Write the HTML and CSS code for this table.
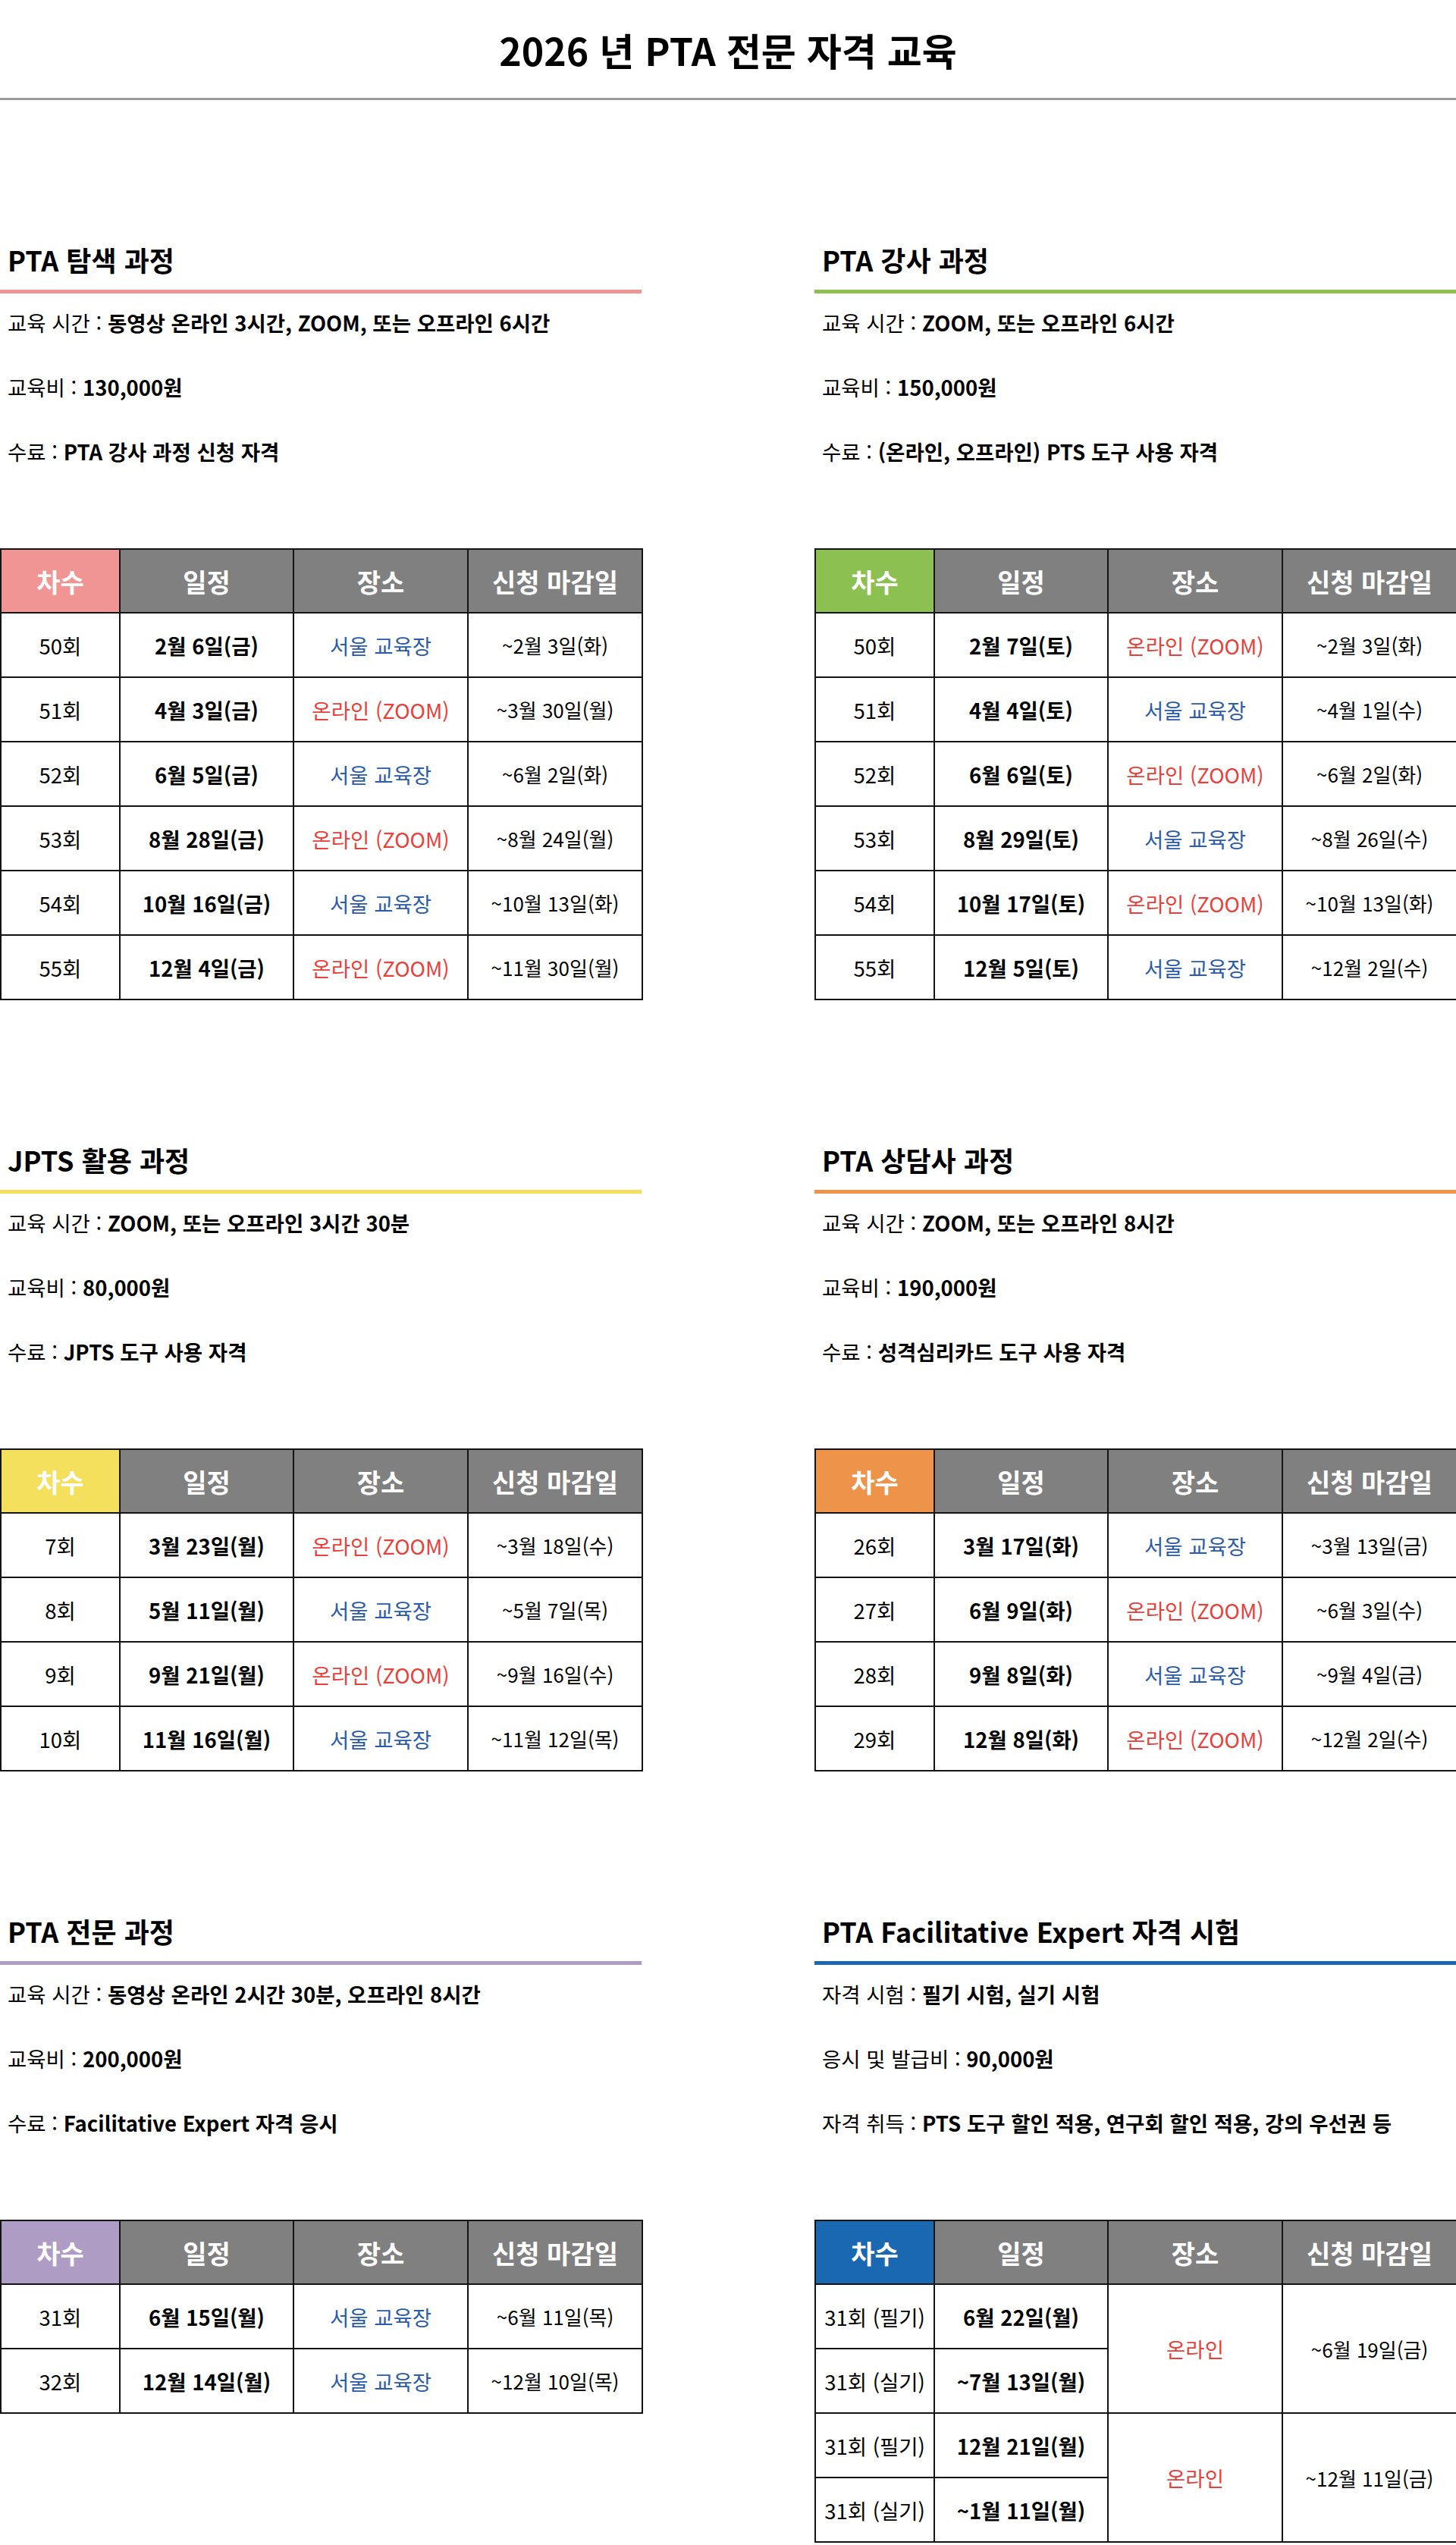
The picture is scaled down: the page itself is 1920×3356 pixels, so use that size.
FILE: index.html
```html
<!DOCTYPE html>
<html lang="ko">
<head>
<meta charset="utf-8">
<title>2026 년 PTA 전문 자격 교육</title>
<link rel="stylesheet" href="styles.css">
</head>
<body>
<header class="page-header">
  <h1 class="page-title">2026 년 PTA 전문 자격 교육</h1>
</header>
<main class="courses">

  <section class="course pink">
    <h2 class="course-title">PTA 탐색 과정</h2>
    <ul class="course-info">
      <li>교육 시간 : <b>동영상 온라인 3시간, ZOOM, 또는 오프라인 6시간</b></li>
      <li>교육비 : <b>130,000원</b></li>
      <li>수료 : <b>PTA 강사 과정 신청 자격</b></li>
    </ul>
    <table class="schedule">
      <colgroup><col class="c1"><col class="c2"><col class="c3"><col class="c4"></colgroup>
      <thead><tr><th class="round">차수</th><th>일정</th><th>장소</th><th>신청 마감일</th></tr></thead>
      <tbody>
        <tr><td>50회</td><td class="date">2월 6일(금)</td><td class="seoul">서울 교육장</td><td class="due">~2월 3일(화)</td></tr>
        <tr><td>51회</td><td class="date">4월 3일(금)</td><td class="online">온라인 (ZOOM)</td><td class="due">~3월 30일(월)</td></tr>
        <tr><td>52회</td><td class="date">6월 5일(금)</td><td class="seoul">서울 교육장</td><td class="due">~6월 2일(화)</td></tr>
        <tr><td>53회</td><td class="date">8월 28일(금)</td><td class="online">온라인 (ZOOM)</td><td class="due">~8월 24일(월)</td></tr>
        <tr><td>54회</td><td class="date">10월 16일(금)</td><td class="seoul">서울 교육장</td><td class="due">~10월 13일(화)</td></tr>
        <tr><td>55회</td><td class="date">12월 4일(금)</td><td class="online">온라인 (ZOOM)</td><td class="due">~11월 30일(월)</td></tr>
      </tbody>
    </table>
  </section>

  <section class="course green">
    <h2 class="course-title">PTA 강사 과정</h2>
    <ul class="course-info">
      <li>교육 시간 : <b>ZOOM, 또는 오프라인 6시간</b></li>
      <li>교육비 : <b>150,000원</b></li>
      <li>수료 : <b>(온라인, 오프라인) PTS 도구 사용 자격</b></li>
    </ul>
    <table class="schedule">
      <colgroup><col class="c1"><col class="c2"><col class="c3"><col class="c4"></colgroup>
      <thead><tr><th class="round">차수</th><th>일정</th><th>장소</th><th>신청 마감일</th></tr></thead>
      <tbody>
        <tr><td>50회</td><td class="date">2월 7일(토)</td><td class="online">온라인 (ZOOM)</td><td class="due">~2월 3일(화)</td></tr>
        <tr><td>51회</td><td class="date">4월 4일(토)</td><td class="seoul">서울 교육장</td><td class="due">~4월 1일(수)</td></tr>
        <tr><td>52회</td><td class="date">6월 6일(토)</td><td class="online">온라인 (ZOOM)</td><td class="due">~6월 2일(화)</td></tr>
        <tr><td>53회</td><td class="date">8월 29일(토)</td><td class="seoul">서울 교육장</td><td class="due">~8월 26일(수)</td></tr>
        <tr><td>54회</td><td class="date">10월 17일(토)</td><td class="online">온라인 (ZOOM)</td><td class="due">~10월 13일(화)</td></tr>
        <tr><td>55회</td><td class="date">12월 5일(토)</td><td class="seoul">서울 교육장</td><td class="due">~12월 2일(수)</td></tr>
      </tbody>
    </table>
  </section>

  <section class="course yellow">
    <h2 class="course-title">JPTS 활용 과정</h2>
    <ul class="course-info">
      <li>교육 시간 : <b>ZOOM, 또는 오프라인 3시간 30분</b></li>
      <li>교육비 : <b>80,000원</b></li>
      <li>수료 : <b>JPTS 도구 사용 자격</b></li>
    </ul>
    <table class="schedule">
      <colgroup><col class="c1"><col class="c2"><col class="c3"><col class="c4"></colgroup>
      <thead><tr><th class="round">차수</th><th>일정</th><th>장소</th><th>신청 마감일</th></tr></thead>
      <tbody>
        <tr><td>7회</td><td class="date">3월 23일(월)</td><td class="online">온라인 (ZOOM)</td><td class="due">~3월 18일(수)</td></tr>
        <tr><td>8회</td><td class="date">5월 11일(월)</td><td class="seoul">서울 교육장</td><td class="due">~5월 7일(목)</td></tr>
        <tr><td>9회</td><td class="date">9월 21일(월)</td><td class="online">온라인 (ZOOM)</td><td class="due">~9월 16일(수)</td></tr>
        <tr><td>10회</td><td class="date">11월 16일(월)</td><td class="seoul">서울 교육장</td><td class="due">~11월 12일(목)</td></tr>
      </tbody>
    </table>
  </section>

  <section class="course orange">
    <h2 class="course-title">PTA 상담사 과정</h2>
    <ul class="course-info">
      <li>교육 시간 : <b>ZOOM, 또는 오프라인 8시간</b></li>
      <li>교육비 : <b>190,000원</b></li>
      <li>수료 : <b>성격심리카드 도구 사용 자격</b></li>
    </ul>
    <table class="schedule">
      <colgroup><col class="c1"><col class="c2"><col class="c3"><col class="c4"></colgroup>
      <thead><tr><th class="round">차수</th><th>일정</th><th>장소</th><th>신청 마감일</th></tr></thead>
      <tbody>
        <tr><td>26회</td><td class="date">3월 17일(화)</td><td class="seoul">서울 교육장</td><td class="due">~3월 13일(금)</td></tr>
        <tr><td>27회</td><td class="date">6월 9일(화)</td><td class="online">온라인 (ZOOM)</td><td class="due">~6월 3일(수)</td></tr>
        <tr><td>28회</td><td class="date">9월 8일(화)</td><td class="seoul">서울 교육장</td><td class="due">~9월 4일(금)</td></tr>
        <tr><td>29회</td><td class="date">12월 8일(화)</td><td class="online">온라인 (ZOOM)</td><td class="due">~12월 2일(수)</td></tr>
      </tbody>
    </table>
  </section>

  <section class="course purple">
    <h2 class="course-title">PTA 전문 과정</h2>
    <ul class="course-info">
      <li>교육 시간 : <b>동영상 온라인 2시간 30분, 오프라인 8시간</b></li>
      <li>교육비 : <b>200,000원</b></li>
      <li>수료 : <b>Facilitative Expert 자격 응시</b></li>
    </ul>
    <table class="schedule">
      <colgroup><col class="c1"><col class="c2"><col class="c3"><col class="c4"></colgroup>
      <thead><tr><th class="round">차수</th><th>일정</th><th>장소</th><th>신청 마감일</th></tr></thead>
      <tbody>
        <tr><td>31회</td><td class="date">6월 15일(월)</td><td class="seoul">서울 교육장</td><td class="due">~6월 11일(목)</td></tr>
        <tr><td>32회</td><td class="date">12월 14일(월)</td><td class="seoul">서울 교육장</td><td class="due">~12월 10일(목)</td></tr>
      </tbody>
    </table>
  </section>

  <section class="course blue">
    <h2 class="course-title">PTA Facilitative Expert 자격 시험</h2>
    <ul class="course-info">
      <li>자격 시험 : <b>필기 시험, 실기 시험</b></li>
      <li>응시 및 발급비 : <b>90,000원</b></li>
      <li>자격 취득 : <b>PTS 도구 할인 적용, 연구회 할인 적용, 강의 우선권 등</b></li>
    </ul>
    <table class="schedule">
      <colgroup><col class="c1"><col class="c2"><col class="c3"><col class="c4"></colgroup>
      <thead><tr><th class="round">차수</th><th>일정</th><th>장소</th><th>신청 마감일</th></tr></thead>
      <tbody>
        <tr><td>31회 (필기)</td><td class="date">6월 22일(월)</td><td class="online" rowspan="2">온라인</td><td class="due" rowspan="2">~6월 19일(금)</td></tr>
        <tr><td>31회 (실기)</td><td class="date">~7월 13일(월)</td></tr>
        <tr><td>31회 (필기)</td><td class="date">12월 21일(월)</td><td class="online" rowspan="2">온라인</td><td class="due" rowspan="2">~12월 11일(금)</td></tr>
        <tr><td>31회 (실기)</td><td class="date">~1월 11일(월)</td></tr>
      </tbody>
    </table>
  </section>

</main>
</body>
</html>
```

FILE: styles.css
```css
* {
  box-sizing: border-box;
}

body {
  margin: 0;
  background: #fff;
  color: #000;
  font-family: "Noto Sans CJK KR", "Noto Sans", sans-serif;
}

.page-header {
  height: 132px;
  border-bottom: 3px solid #9a9a9a;
  display: flex;
  align-items: center;
  justify-content: center;
}

.page-title {
  margin: 0;
  font-size: 50px;
  font-weight: 700;
  line-height: 1;
}

.courses {
  display: grid;
  grid-template-columns: 846px 846px;
  column-gap: 228px;
}

.course {
  padding-top: 185px;
}

.pink { --accent: #f09494; }
.green { --accent: #8cc152; }
.yellow { --accent: #f4e05c; }
.orange { --accent: #ee944a; }
.purple { --accent: #ae9cc4; }
.blue { --accent: #1b68b2; }

.course-title {
  margin: 0;
  padding: 0 0 15px 10px;
  font-size: 36px;
  font-weight: 700;
  line-height: 50px;
  border-bottom: 5px solid var(--accent);
}

.course-info {
  list-style: none;
  margin: -4px 0 0;
  padding: 0 0 0 10px;
}

.course-info li {
  font-size: 27.5px;
  line-height: 85px;
}

.course-info b {
  font-weight: 700;
}

.schedule {
  margin-top: 85px;
  width: 846px;
  border-collapse: collapse;
  table-layout: fixed;
}

.schedule .c1 { width: 157px; }
.schedule .c2 { width: 229px; }
.schedule .c3 { width: 230px; }
.schedule .c4 { width: 230px; }

.schedule th,
.schedule td {
  border: 2px solid #141414;
  padding: 0;
  text-align: center;
  vertical-align: middle;
  white-space: nowrap;
}

.schedule th {
  height: 84px;
  background: #808080;
  color: #fff;
  font-size: 34px;
  font-weight: 700;
}

.schedule th.round {
  background: var(--accent);
}

.schedule td {
  height: 85px;
  font-size: 27.5px;
  font-weight: 400;
}

.schedule td.date {
  font-weight: 700;
}

.schedule td.due {
  font-size: 26px;
}

.schedule td.seoul {
  color: #2b5cab;
}

.schedule td.online {
  color: #e8413c;
}
```
